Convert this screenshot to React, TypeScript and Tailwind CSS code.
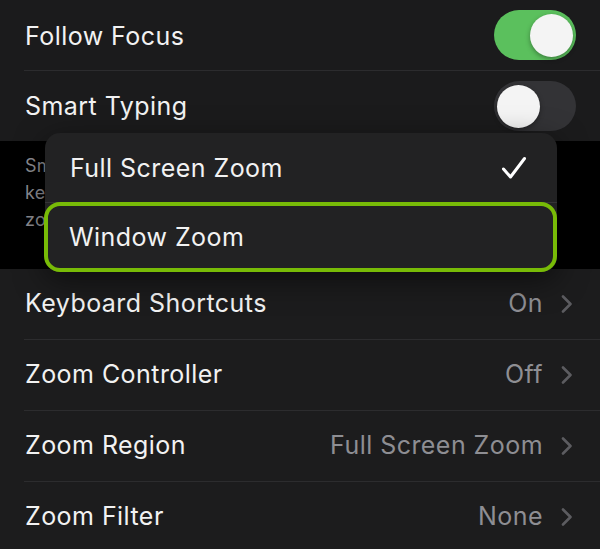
import * as React from "react";

// Toggle switch drawn with plain divs
function Toggle({ on }: { on: boolean }) {
  return (
    <div
      className={
        "relative h-[50px] w-[82px] rounded-full " +
        (on ? "bg-[#5bc05d]" : "bg-[#333336]")
      }
    >
      <div
        className={
          "absolute top-[3.5px] h-[43px] w-[43px] rounded-full bg-[#f4f4f4] shadow-[0_2px_5px_rgba(0,0,0,0.35)] " +
          (on ? "left-[36px]" : "left-[3px]")
        }
      />
    </div>
  );
}

function Chevron() {
  return (
    <svg width="12" height="18" viewBox="0 0 12 18" fill="none">
      <path
        d="M2 1.5 L9.5 9 L2 16.5"
        stroke="#5c5c60"
        strokeWidth="2.6"
        strokeLinecap="round"
        strokeLinejoin="round"
      />
    </svg>
  );
}

const font = { fontFamily: "Inter, 'Noto Sans', sans-serif" };

const navRows = [
  { label: "Keyboard Shortcuts", value: "On" },
  { label: "Zoom Controller", value: "Off" },
  { label: "Zoom Region", value: "Full Screen Zoom" },
  { label: "Zoom Filter", value: "None" },
];

export default function App() {
  return (
    <div
      className="relative h-[549px] w-[600px] overflow-hidden bg-black text-[25px] tracking-[0.45px] text-[#f2f2f2]"
      style={font}
    >
      {/* First group: toggles */}
      <div className="bg-[#1b1b1c]">
        <div className="flex h-[70px] items-center justify-between pl-[25px] pr-[24px]">
          <span className="pt-[3px]">Follow Focus</span>
          <Toggle on />
        </div>
        <div className="ml-[24px] h-px bg-[#2c2c2e]" />
        <div className="flex h-[70px] items-center justify-between pl-[25px] pr-[24px]">
          <span className="pt-[2px]">Smart Typing</span>
          <Toggle on={false} />
        </div>
      </div>

      {/* Footer text, mostly hidden under the menu */}
      <div className="h-[128px] px-[25px] pt-[11px] text-[18px] leading-[27px] tracking-[0.3px] text-[#8d8d92]">
        Smart Typing will switch to Window Zoom when a
        <br />
        keyboard appears, and move the window so that
        <br />
        zoomed text is not hidden by the keyboard.
      </div>

      {/* Second group: navigation rows */}
      <div className="bg-[#1c1c1d]">
        {navRows.map((row, i) => (
          <div key={row.label}>
            {i > 0 && <div className="ml-[24px] h-px bg-[#2c2c2e]" />}
            <div className="flex h-[70px] items-center justify-between pl-[25px] pr-[27px]">
              <span>{row.label}</span>
              <div className="flex items-center gap-[18px]">
                <span className="text-[#8e8e93]">{row.value}</span>
                <Chevron />
              </div>
            </div>
          </div>
        ))}
      </div>

      {/* Popup menu */}
      <div className="absolute left-[45px] top-[133px] w-[512px] rounded-[15px] bg-[#222223] shadow-[0_8px_30px_rgba(0,0,0,0.5)]">
        <div className="flex h-[70px] items-center justify-between border-b border-[#343436] pl-[25px] pr-[30px]">
          <span className="pt-[3px]">Full Screen Zoom</span>
          <svg width="26" height="24" viewBox="0 0 26 24" fill="none">
            <path
              d="M2.5 13 L9.5 21 L23.5 2.5"
              stroke="#ffffff"
              strokeWidth="3"
              strokeLinecap="round"
              strokeLinejoin="round"
            />
          </svg>
        </div>
        <div className="-ml-px -mt-px flex h-[70px] items-center rounded-[16px] border-[4.5px] border-[#78bb07] pl-[21px]">
          <span className="pt-[2px]">Window Zoom</span>
        </div>
      </div>
    </div>
  );
}
